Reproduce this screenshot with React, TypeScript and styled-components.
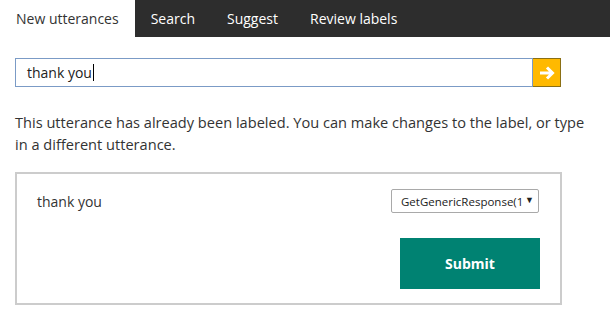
import React from "react";
import styled, { createGlobalStyle } from "styled-components";

const GlobalStyle = createGlobalStyle`
  *, *::before, *::after {
    box-sizing: border-box;
  }
  body {
    margin: 0;
    background: #fff;
    font-family: "Open Sans", "Noto Sans", Arial, sans-serif;
    color: #333;
  }
`;

const tabs = ["New utterances", "Search", "Suggest", "Review labels"];

const NavBar = styled.nav`
  display: flex;
  height: 37px;
  background: #2d2d2d;
`;

const Tab = styled.div<{ $active?: boolean }>`
  display: flex;
  align-items: center;
  padding: 0 16px;
  font-size: 14px;
  color: ${(p) => (p.$active ? "#333" : "#fff")};
  background: ${(p) => (p.$active ? "#fff" : "transparent")};
`;

const Main = styled.main`
  padding: 21px 12px 0 15px;
`;

const SearchRow = styled.div`
  display: flex;
  width: 546px;
  height: 29px;
`;

const SearchInput = styled.div`
  flex: 1;
  display: flex;
  align-items: center;
  border: 1px solid #7b9bc6;
  padding: 0 11px;
  font-size: 14px;
  color: #222;
`;

const Caret = styled.span`
  display: inline-block;
  width: 1px;
  height: 17px;
  background: #000;
  margin-left: 1px;
`;

const GoButton = styled.button`
  width: 28px;
  border: 1px solid #8a6f14;
  border-left: none;
  background: #ffb900;
  padding: 0;
  display: flex;
  align-items: center;
  justify-content: center;
`;

const Message = styled.p`
  margin: 24px 0 0;
  font-size: 14.6px;
  line-height: 22px;
  color: #333;
`;

const Card = styled.section`
  margin-top: 17px;
  width: 547px;
  border: 2px solid #ccc;
  padding: 15px 21px 14px 20px;
`;

const LabelRow = styled.div`
  display: flex;
  justify-content: space-between;
  align-items: center;
`;

const Utterance = styled.span`
  font-size: 14px;
  color: #333;
`;

const IntentSelect = styled.div`
  display: flex;
  align-items: center;
  width: 148px;
  height: 24px;
  border: 1px solid #a9a9a9;
  border-radius: 2px;
  padding: 0 4px 0 9px;
  font-size: 11.5px;
  color: #222;
`;

const SelectText = styled.span`
  flex: 1;
  overflow: hidden;
  white-space: nowrap;
`;

const SelectArrow = styled.span`
  font-size: 9px;
  margin-left: 3px;
  margin-top: -4px;
`;

const Actions = styled.div`
  display: flex;
  justify-content: flex-end;
  margin-top: 25px;
`;

const SubmitButton = styled.button`
  width: 140px;
  height: 51px;
  margin-right: -1px;
  border: none;
  background: #008272;
  color: #fff;
  font-family: inherit;
  font-weight: 700;
  font-size: 14px;
`;

export default function App() {
  return (
    <>
      <GlobalStyle />
      <NavBar>
        {tabs.map((t, i) => (
          <Tab key={t} $active={i === 0}>
            {t}
          </Tab>
        ))}
      </NavBar>
      <Main>
        <SearchRow>
          <SearchInput>
            thank you
            <Caret />
          </SearchInput>
          <GoButton aria-label="Go">
            <svg width="18" height="16" viewBox="0 0 18 16">
              <path
                d="M2 8h12M9 2.5 14.5 8 9 13.5"
                fill="none"
                stroke="#fff"
                strokeWidth="3"
              />
            </svg>
          </GoButton>
        </SearchRow>
        <Message>
          This utterance has already been labeled. You can make changes to the
          label, or type in a different utterance.
        </Message>
        <Card>
          <LabelRow>
            <Utterance>thank you</Utterance>
            <IntentSelect>
              <SelectText>GetGenericResponse(1)</SelectText>
              <SelectArrow>▼</SelectArrow>
            </IntentSelect>
          </LabelRow>
          <Actions>
            <SubmitButton>Submit</SubmitButton>
          </Actions>
        </Card>
      </Main>
    </>
  );
}
